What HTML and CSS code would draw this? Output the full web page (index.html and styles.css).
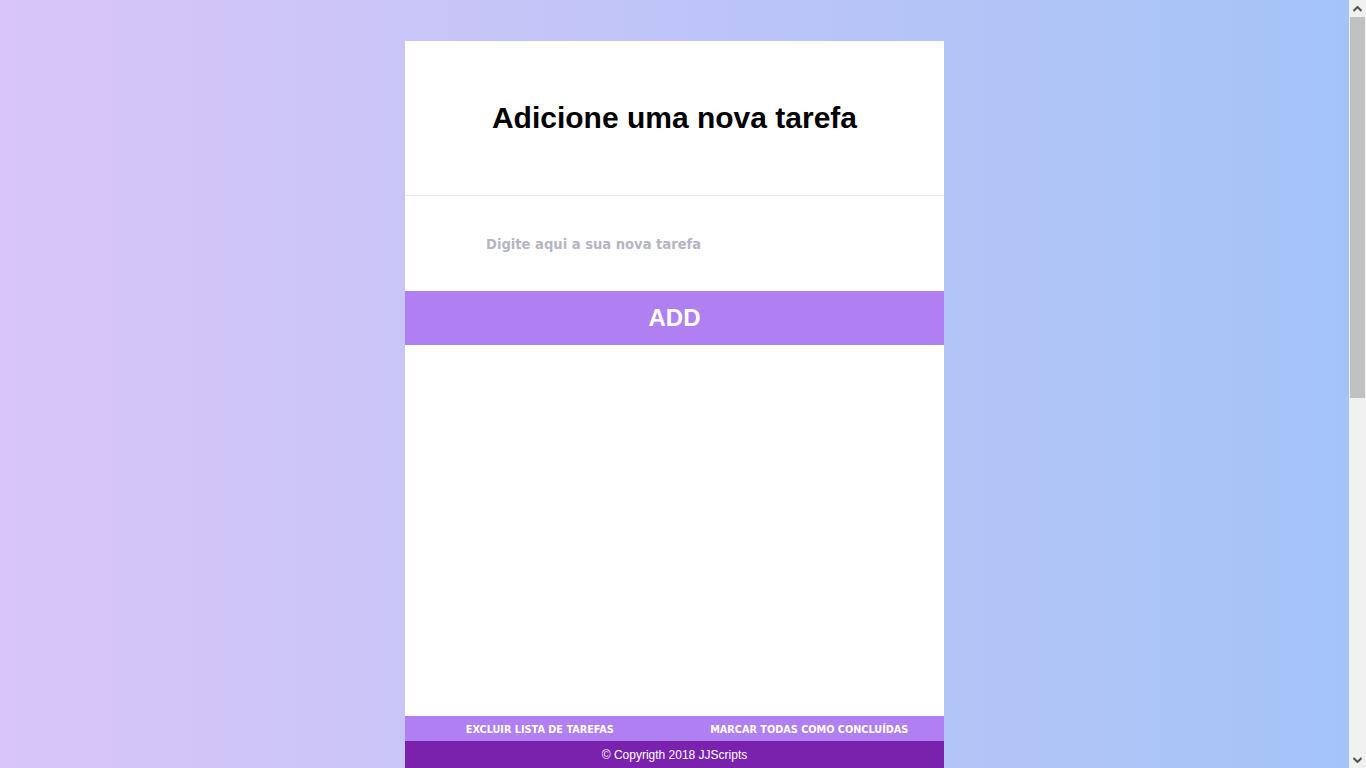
FILE: index.html
```html
<!DOCTYPE html>
<html lang="pt-BR">
<head>
<meta charset="utf-8">
<title>Lista de tarefas</title>
<link rel="stylesheet" href="styles.css">
</head>
<body>
<div class="page">
  <main class="app">
    <header class="app-header">
      <h1 class="title">Adicione uma nova tarefa</h1>
    </header>
    <form class="new-task" onsubmit="return false">
      <div class="input-row">
        <input class="task-input" type="text" placeholder="Digite aqui a sua nova tarefa">
      </div>
      <button class="add-btn" type="submit">ADD</button>
    </form>
    <ul class="task-list"></ul>
    <div class="actions">
      <button class="action" type="button">EXCLUIR LISTA DE TAREFAS</button>
      <button class="action" type="button">MARCAR TODAS COMO CONCLUÍDAS</button>
    </div>
    <footer class="copy">© Copyrigth 2018 JJScripts</footer>
  </main>
</div>
<div class="scrollbar" aria-hidden="true">
  <div class="sb-arrow">
    <svg width="9" height="6" viewBox="0 0 9 6"><path d="M0.5 5 L4.5 1 L8.5 5" fill="none" stroke="#505050" stroke-width="2"/></svg>
  </div>
  <div class="sb-track"><div class="sb-thumb"></div></div>
  <div class="sb-arrow">
    <svg width="9" height="6" viewBox="0 0 9 6"><path d="M0.5 1 L4.5 5 L8.5 1" fill="none" stroke="#505050" stroke-width="2"/></svg>
  </div>
</div>
</body>
</html>
```
FILE: styles.css
```css
html, body {
  margin: 0;
  padding: 0;
}
body {
  font-family: "Liberation Sans", Arial, sans-serif;
  overflow: hidden;
}
.page {
  margin-right: 17px;
  padding: 41px 0 680px;
  background: linear-gradient(to right, #d9c5f8, #a4c4f7);
}
.app {
  width: 539px;
  margin: 0 auto;
  background: #fff;
  display: flex;
  flex-direction: column;
}
.app-header {
  height: 154px;
  border-bottom: 1px solid #e8e8e8;
  display: flex;
  align-items: center;
  justify-content: center;
}
.title {
  margin: 0;
  font-size: 30px;
  font-weight: bold;
  color: #000;
}
.new-task {
  display: flex;
  flex-direction: column;
  margin: 0;
}
.input-row {
  height: 95px;
  display: flex;
  align-items: center;
  padding-left: 81px;
}
.task-input {
  border: none;
  outline: none;
  width: 380px;
  padding: 0;
  font-family: "DejaVu Sans Condensed", "DejaVu Sans", sans-serif;
  font-weight: bold;
  font-size: 14.6px;
  color: #555;
  background: transparent;
}
.task-input::placeholder {
  color: #b5b5c5;
}
.add-btn {
  height: 54px;
  border: none;
  background: #b07ff1;
  color: #fff;
  font-family: "Liberation Sans", Arial, sans-serif;
  font-weight: bold;
  font-size: 24px;
  padding: 0;
  cursor: pointer;
}
.task-list {
  list-style: none;
  margin: 0;
  padding: 0;
  height: 371px;
}
.actions {
  display: flex;
  height: 25px;
  background: #b07ff1;
}
.action {
  flex: 1;
  border: none;
  background: transparent;
  color: #fff;
  font-family: "DejaVu Sans Condensed", "DejaVu Sans", sans-serif;
  font-weight: bold;
  font-size: 10.8px;
  padding: 1px 0 0;
  cursor: pointer;
}
.copy {
  height: 27px;
  background: #7a22ae;
  color: #fff;
  font-size: 12px;
  display: flex;
  align-items: center;
  justify-content: center;
}
.scrollbar {
  position: fixed;
  top: 0;
  right: 0;
  width: 17px;
  height: 100vh;
  background: #f0f0f0;
  display: flex;
  flex-direction: column;
}
.sb-arrow {
  height: 17px;
  display: flex;
  align-items: center;
  justify-content: center;
}
.sb-track {
  flex: 1;
}
.sb-thumb {
  margin: 0 1px;
  height: 381px;
  background: #c1c1c1;
}
```
